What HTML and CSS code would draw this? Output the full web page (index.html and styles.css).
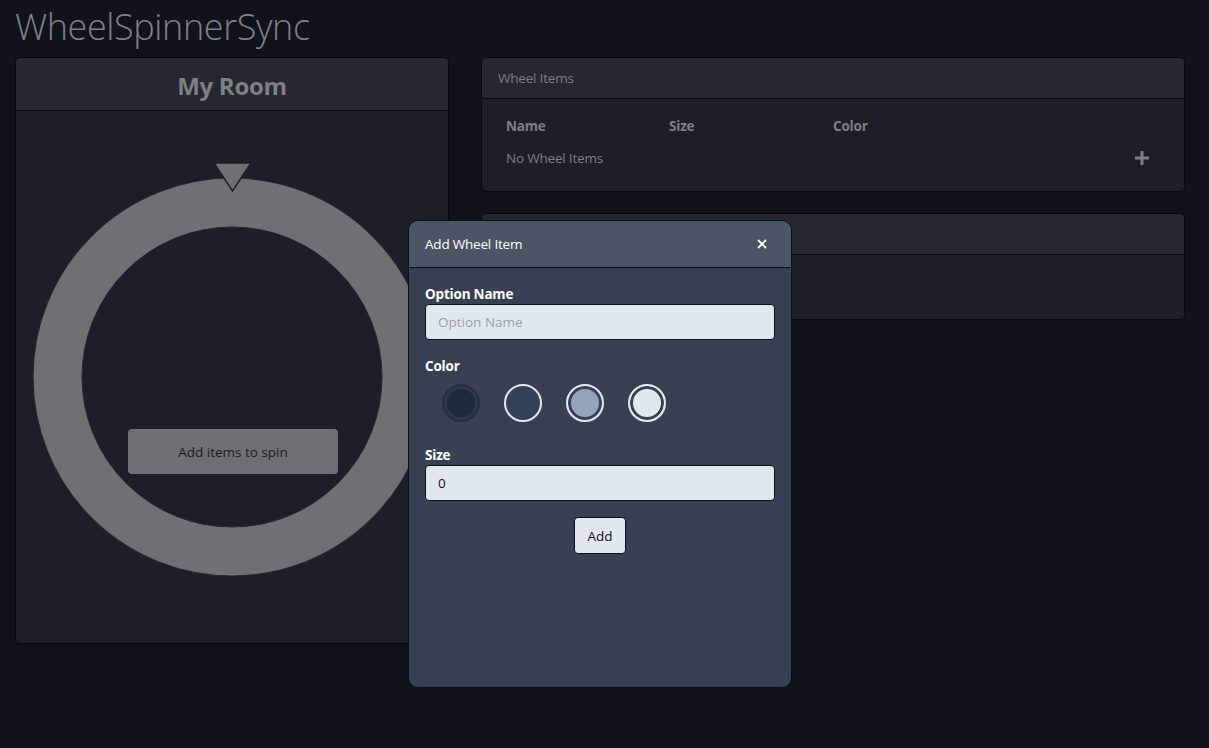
FILE: index.html
```html
<!DOCTYPE html>
<html lang="en">
<head>
<meta charset="utf-8">
<title>WheelSpinnerSync</title>
<link rel="stylesheet" href="styles.css">
</head>
<body>
<div class="page">
  <h1 class="app-title">WheelSpinnerSync</h1>
  <div class="layout">
    <section class="card room-card">
      <header class="room-header">My Room</header>
      <div class="room-body">
        <div class="wheel">
          <svg class="wheel-svg" width="400" height="416" viewBox="0 0 400 416" aria-hidden="true">
            <circle cx="200" cy="216" r="174.5" fill="none" stroke="#6e7074" stroke-width="49"/>
            <circle cx="200" cy="216" r="199" fill="none" stroke="#26272b" stroke-width="1.2"/>
            <circle cx="200" cy="216" r="150" fill="none" stroke="#26272b" stroke-width="1"/>
            <polygon points="182,2 219,2 200.5,30" fill="#6e7074" stroke="#1d1e22" stroke-width="1.5" stroke-linejoin="miter"/>
          </svg>
          <button class="spin-btn" type="button">Add items to spin</button>
        </div>
      </div>
    </section>
    <div class="side">
      <section class="card items-card">
        <header class="card-header">Wheel Items</header>
        <div class="items-body">
          <div class="items-grid">
            <div class="col-head">Name</div>
            <div class="col-head">Size</div>
            <div class="col-head">Color</div>
            <div></div>
            <div class="empty">No Wheel Items</div>
            <div></div>
            <div></div>
            <div class="plus-cell">
              <svg width="16" height="16" viewBox="0 0 16 16" aria-hidden="true"><path d="M8 1v14M1 8h14" stroke="#7d7f83" stroke-width="3"/></svg>
            </div>
          </div>
        </div>
      </section>
      <section class="card second-card">
        <header class="card-header"></header>
        <div class="second-body"></div>
      </section>
    </div>
  </div>

  <div class="modal">
    <div class="modal-header">
      <span>Add Wheel Item</span>
      <svg class="close" width="10" height="10" viewBox="0 0 10 10" aria-hidden="true"><path d="M1 1l8 8M9 1l-8 8" stroke="#ffffff" stroke-width="1.8"/></svg>
    </div>
    <div class="modal-body">
      <label class="field-label">Option Name</label>
      <input class="field-input" type="text" placeholder="Option Name">
      <label class="field-label color-label">Color</label>
      <div class="swatches">
        <span class="swatch sw-1 selected"></span>
        <span class="swatch sw-2"></span>
        <span class="swatch sw-3"></span>
        <span class="swatch sw-4"></span>
      </div>
      <label class="field-label size-label">Size</label>
      <input class="field-input" type="text" value="0">
      <div class="actions"><button class="add-btn" type="button">Add</button></div>
    </div>
  </div>
</div>
</body>
</html>
```

FILE: styles.css
```css
* { box-sizing: border-box; }
html, body { margin: 0; padding: 0; }
body {
  background: #0f131b;
  font-family: "Open Sans", "Noto Sans", sans-serif;
  color: #7d7f83;
  width: 1209px;
  height: 748px;
  overflow: hidden;
}
.page {
  position: relative;
  padding: 0 24px 0 15px;
}
.app-title {
  margin: 0;
  height: 57px;
  padding-top: 5px;
  font-size: 36px;
  font-weight: 300;
  line-height: 44px;
  color: #808185;
  letter-spacing: -0.4px;
}
.layout {
  display: grid;
  grid-template-columns: 434px 704px;
  column-gap: 32px;
  align-items: start;
}
.card {
  border: 1px solid #07090d;
  border-radius: 5px;
  background: #1c1f27;
  overflow: hidden;
}
.room-card { height: 587px; }
.room-header {
  height: 53px;
  padding-top: 3px;
  background: #252830;
  border-bottom: 1px solid #07090d;
  display: flex;
  align-items: center;
  justify-content: center;
  font-size: 24px;
  font-weight: 700;
  color: #7d7f83;
  letter-spacing: -0.3px;
}
.room-body {
  padding-top: 50px;
  display: flex;
  justify-content: center;
}
.wheel {
  position: relative;
  width: 400px;
  height: 416px;
}
.wheel-svg { display: block; }
.spin-btn {
  position: absolute;
  left: 96px;
  top: 268px;
  width: 210px;
  height: 45px;
  border: 0;
  border-radius: 4px;
  background: #6e7074;
  color: #1b1d22;
  font-family: inherit;
  font-size: 13.5px;
}
.side {
  display: flex;
  flex-direction: column;
  gap: 21px;
}
.card-header {
  height: 41px;
  background: #252830;
  border-bottom: 1px solid #07090d;
  padding: 0 16px;
  display: flex;
  align-items: center;
  font-size: 13.5px;
  color: #7d7f83;
  letter-spacing: -0.2px;
}
.items-card { height: 135px; }
.items-body { padding: 11px 16px 0 24px; }
.items-grid {
  display: grid;
  grid-template-columns: 163px 164px 1fr 60px;
  grid-auto-rows: 32px;
  align-items: center;
}
.col-head {
  font-weight: 700;
  font-size: 13.5px;
  color: #7d7f83;
  letter-spacing: -0.2px;
}
.empty {
  font-size: 13.5px;
  color: #7d7f83;
  letter-spacing: -0.2px;
}
.plus-cell {
  display: flex;
  justify-content: flex-end;
  padding-right: 18px;
}
.plus-cell svg { display: block; }
.second-card { height: 107px; }

.modal {
  position: absolute;
  left: 408px;
  top: 220px;
  width: 384px;
  height: 468px;
  border: 1px solid #0c0f15;
  border-radius: 10px;
  background: #384152;
  overflow: hidden;
}
.modal-header {
  height: 47px;
  background: #4b5563;
  border-bottom: 1px solid #0c0f15;
  padding: 0 24px 0 16px;
  display: flex;
  align-items: center;
  justify-content: space-between;
  color: #ffffff;
  font-size: 13.5px;
  letter-spacing: -0.2px;
}
.close { display: block; }
.modal-body {
  padding: 17px 16px 0 16px;
  display: flex;
  flex-direction: column;
}
.field-label {
  display: block;
  color: #ffffff;
  font-size: 13.5px;
  font-weight: 700;
  line-height: 18px;
  margin-bottom: 1px;
  letter-spacing: -0.2px;
}
.field-input {
  display: block;
  width: 350px;
  height: 36px;
  border: 1px solid #0c0f15;
  border-radius: 4px;
  background: #e2e8f0;
  padding: 0 12px;
  font-family: inherit;
  font-size: 13.5px;
  color: #111;
  outline: none;
}
.field-input::placeholder { color: #9aa1ab; }
.color-label { margin-top: 17px; margin-bottom: 9px; }
.swatches {
  display: flex;
  gap: 24px;
  padding-left: 17px;
}
.swatch {
  width: 38px;
  height: 38px;
  border-radius: 50%;
  border: 2px solid #e2e8f0;
  box-shadow: inset 0 0 0 3px #384152;
}
.sw-1 { background: #1e293b; border-color: #263144; box-shadow: inset 0 0 0 3px #2e384a; }
.sw-2 { background: #334155; }
.sw-3 { background: #94a3b8; }
.sw-4 { background: #e2e8f0; }
.size-label { margin-top: 24px; }
.actions {
  display: flex;
  justify-content: center;
  margin-top: 16px;
}
.add-btn {
  width: 52px;
  height: 37px;
  border: 1px solid #0c0f15;
  border-radius: 4px;
  background: #e2e8f0;
  color: #111;
  font-family: inherit;
  font-size: 13.5px;
}
```
